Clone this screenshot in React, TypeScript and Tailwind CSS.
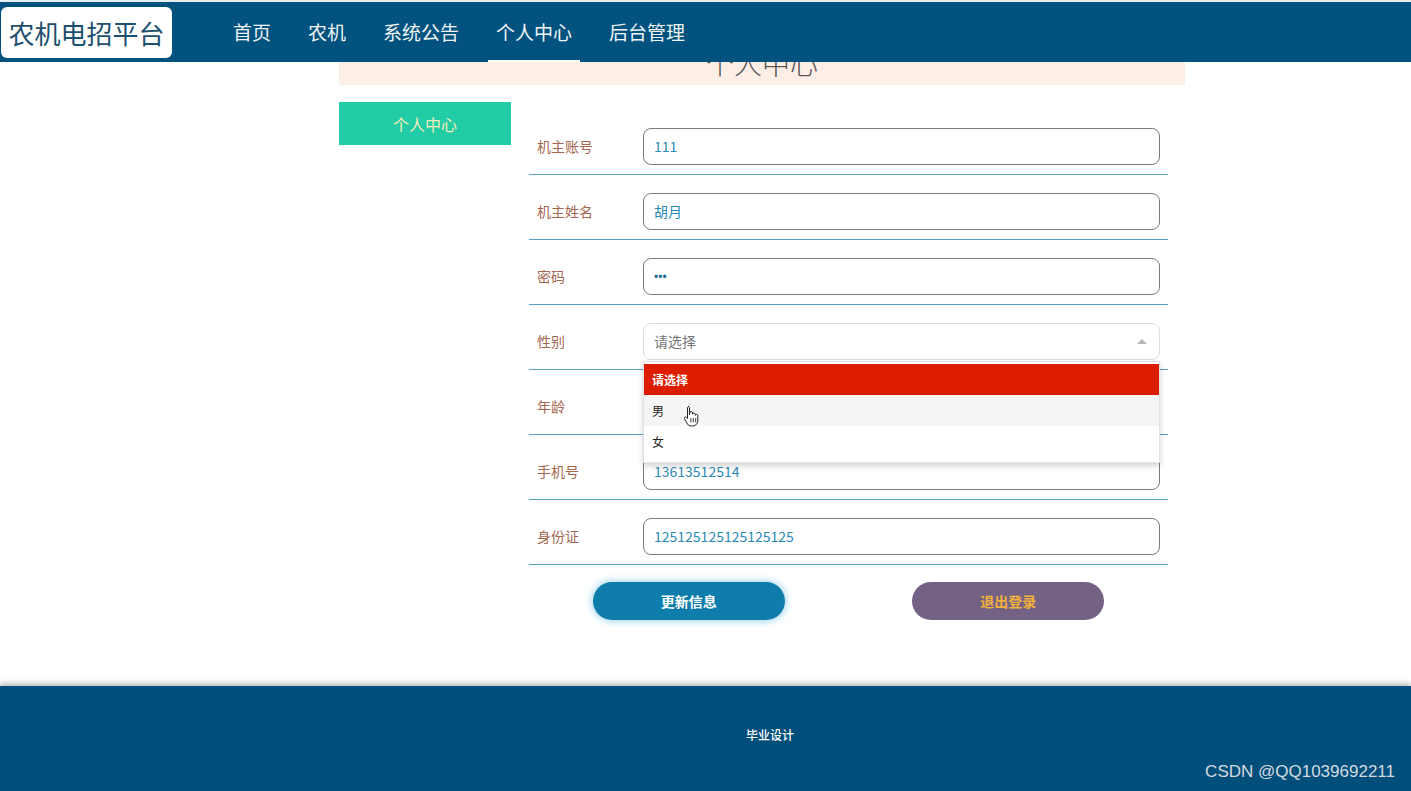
import { ChevronDown } from 'lucide-react'

const font = { fontFamily: '"Microsoft YaHei", "Noto Sans CJK SC", "Noto Sans", sans-serif' }

type Field = { label: string; value: string; kind?: 'text' | 'select' | 'hidden' | 'password' }

const fields: Field[] = [
    { label: '机主账号', value: '111' },
    { label: '机主姓名', value: '胡月' },
    { label: '密码', value: '•••', kind: 'password' },
    { label: '性别', value: '请选择', kind: 'select' },
    { label: '年龄', value: '', kind: 'hidden' },
    { label: '手机号', value: '13613512514' },
    { label: '身份证', value: '125125125125125125' },
]

function HandCursor() {
    return (
        <svg width="17" height="22" viewBox="0 0 17 22" className="absolute left-[39px] top-[10px]">
            <path
                d="M5 1.5c.9 0 1.5.6 1.5 1.5v7l.2-2.2c.1-.8.7-1.3 1.4-1.3.8 0 1.4.6 1.4 1.4v1.3c.1-.7.7-1.2 1.4-1.2.8 0 1.4.6 1.4 1.4v1c.1-.6.6-1 1.2-1 .8 0 1.3.6 1.3 1.3v4.8c0 3-2 5.5-5.3 5.5H8.2c-1.6 0-2.8-.7-3.7-2L1.6 14c-.5-.7-.3-1.5.3-1.9.6-.4 1.4-.2 1.8.4l.8 1.1V3c0-.9.6-1.5 1.5-1.5z"
                fill="#fff"
                stroke="#222"
                strokeWidth="1"
                strokeLinejoin="round"
            />
            <path d="M7.9 13.5v3.5M10.3 13.5v3.5M12.7 13.5v3.5" stroke="#222" strokeWidth="0.9" strokeLinecap="round" />
        </svg>
    )
}

function Row({ field }: { field: Field }) {
    return (
        <div className="flex items-center pt-[18px] pb-[9px] border-b border-[#5a9fc6]">
            <label className="w-[114px] pl-2 text-[14px] text-[#a3674f]">{field.label}</label>
            {field.kind === 'select' ? (
                <div className="relative w-[517px] z-10">
                    <div className="h-[37px] rounded-lg border border-[#dcdcdc] bg-white flex items-center justify-between pl-[10px] pr-3 text-[14px] text-[#777]">
                        <span>请选择</span>
                        <span className="w-0 h-0 border-x-[5px] border-x-transparent border-b-[5px] border-b-[#b5b5b5]" />
                    </div>
                    <div className="absolute left-0 right-0 top-full mt-[1px] bg-white border border-[#e2e2e2] shadow-[0_3px_6px_rgba(0,0,0,0.18)] pt-[2px] pb-[5px] text-[12px]">
                        <div className="h-[31px] flex items-center pl-2 bg-[#dd1d00] text-white font-semibold">请选择</div>
                        <div className="relative h-[31px] flex items-center pl-2 bg-[#f5f5f5] text-[#222]">
                            男
                            <HandCursor />
                        </div>
                        <div className="h-[31px] flex items-center pl-2 text-[#222]">女</div>
                    </div>
                    <ChevronDown className="hidden" />
                </div>
            ) : (
                <div className="w-[517px] h-[37px] rounded-lg border border-[#7b7b7b] bg-white flex items-center pl-[10px] text-[14px] text-[#2b8ab4]">
                    {field.kind === 'hidden' ? (
                        ''
                    ) : field.kind === 'password' ? (
                        <span className="text-[12px] text-[#1f6f9a]" style={{ fontFamily: '"Liberation Sans", sans-serif' }}>
                            {field.value}
                        </span>
                    ) : (
                        field.value
                    )}
                </div>
            )}
        </div>
    )
}

export default function App() {
    return (
        <div className="min-h-screen bg-white relative" style={font}>
            <header className="fixed top-0 left-0 right-0 z-30 h-[62px] border-t-2 border-[#e9eef1] bg-[#01527e] flex items-center">
                <div className="ml-px h-[51px] w-[171px] rounded-md bg-white flex items-center justify-center text-[26px] text-[#1d4f70]">
                    农机电招平台
                </div>
                <nav className="ml-[53px] flex h-full items-stretch gap-[21px] text-[19px] text-[#eef4f7]">
                    <a className="px-2 flex items-center">首页</a>
                    <a className="px-2 flex items-center">农机</a>
                    <a className="px-2 flex items-center">系统公告</a>
                    <a className="px-2 flex items-center border-b-2 border-white pt-[2px]">个人中心</a>
                    <a className="px-2 flex items-center">后台管理</a>
                </nav>
            </header>

            <main className="ml-[339px] w-[846px] pt-[41px] pb-[66px]">
                <div className="h-[44px] bg-[#fdeee6] text-center text-[28px] leading-[44px] text-[#555] font-light">个人中心</div>

                <div className="mt-[17px] flex gap-[18px]">
                    <aside className="w-[172px]">
                        <div className="h-[43px] bg-[#21cca6] flex items-center justify-center text-[16px] text-[#f6edb8]">个人中心</div>
                    </aside>

                    <div className="w-[639px] pt-2">
                        {fields.map((f) => (
                            <Row key={f.label} field={f} />
                        ))}
                        <div className="mt-[17px] flex justify-around">
                            <button className="w-[192px] h-[38px] rounded-full bg-[#0f7dab] text-white text-[14px] font-semibold shadow-[0_0_6px_2px_rgba(110,190,230,0.55)]">
                                更新信息
                            </button>
                            <button className="w-[192px] h-[38px] rounded-full bg-[#736283] text-[#f2b13c] text-[14px] font-semibold">
                                退出登录
                            </button>
                        </div>
                    </div>
                </div>
            </main>

            <footer className="h-[105px] bg-[#004e7a] shadow-[0_-3px_5px_rgba(0,0,0,0.25)] flex items-center justify-center pl-[129px] pb-2 relative">
                <span className="text-[12px] text-white font-medium">毕业设计</span>
                <span
                    className="absolute right-[16px] bottom-[7px] text-[17px] text-[#d4dae0]"
                    style={{ fontFamily: '"Liberation Sans Narrow", "Liberation Sans", sans-serif' }}
                >
                    CSDN @QQ1039692211
                </span>
            </footer>
        </div>
    )
}
